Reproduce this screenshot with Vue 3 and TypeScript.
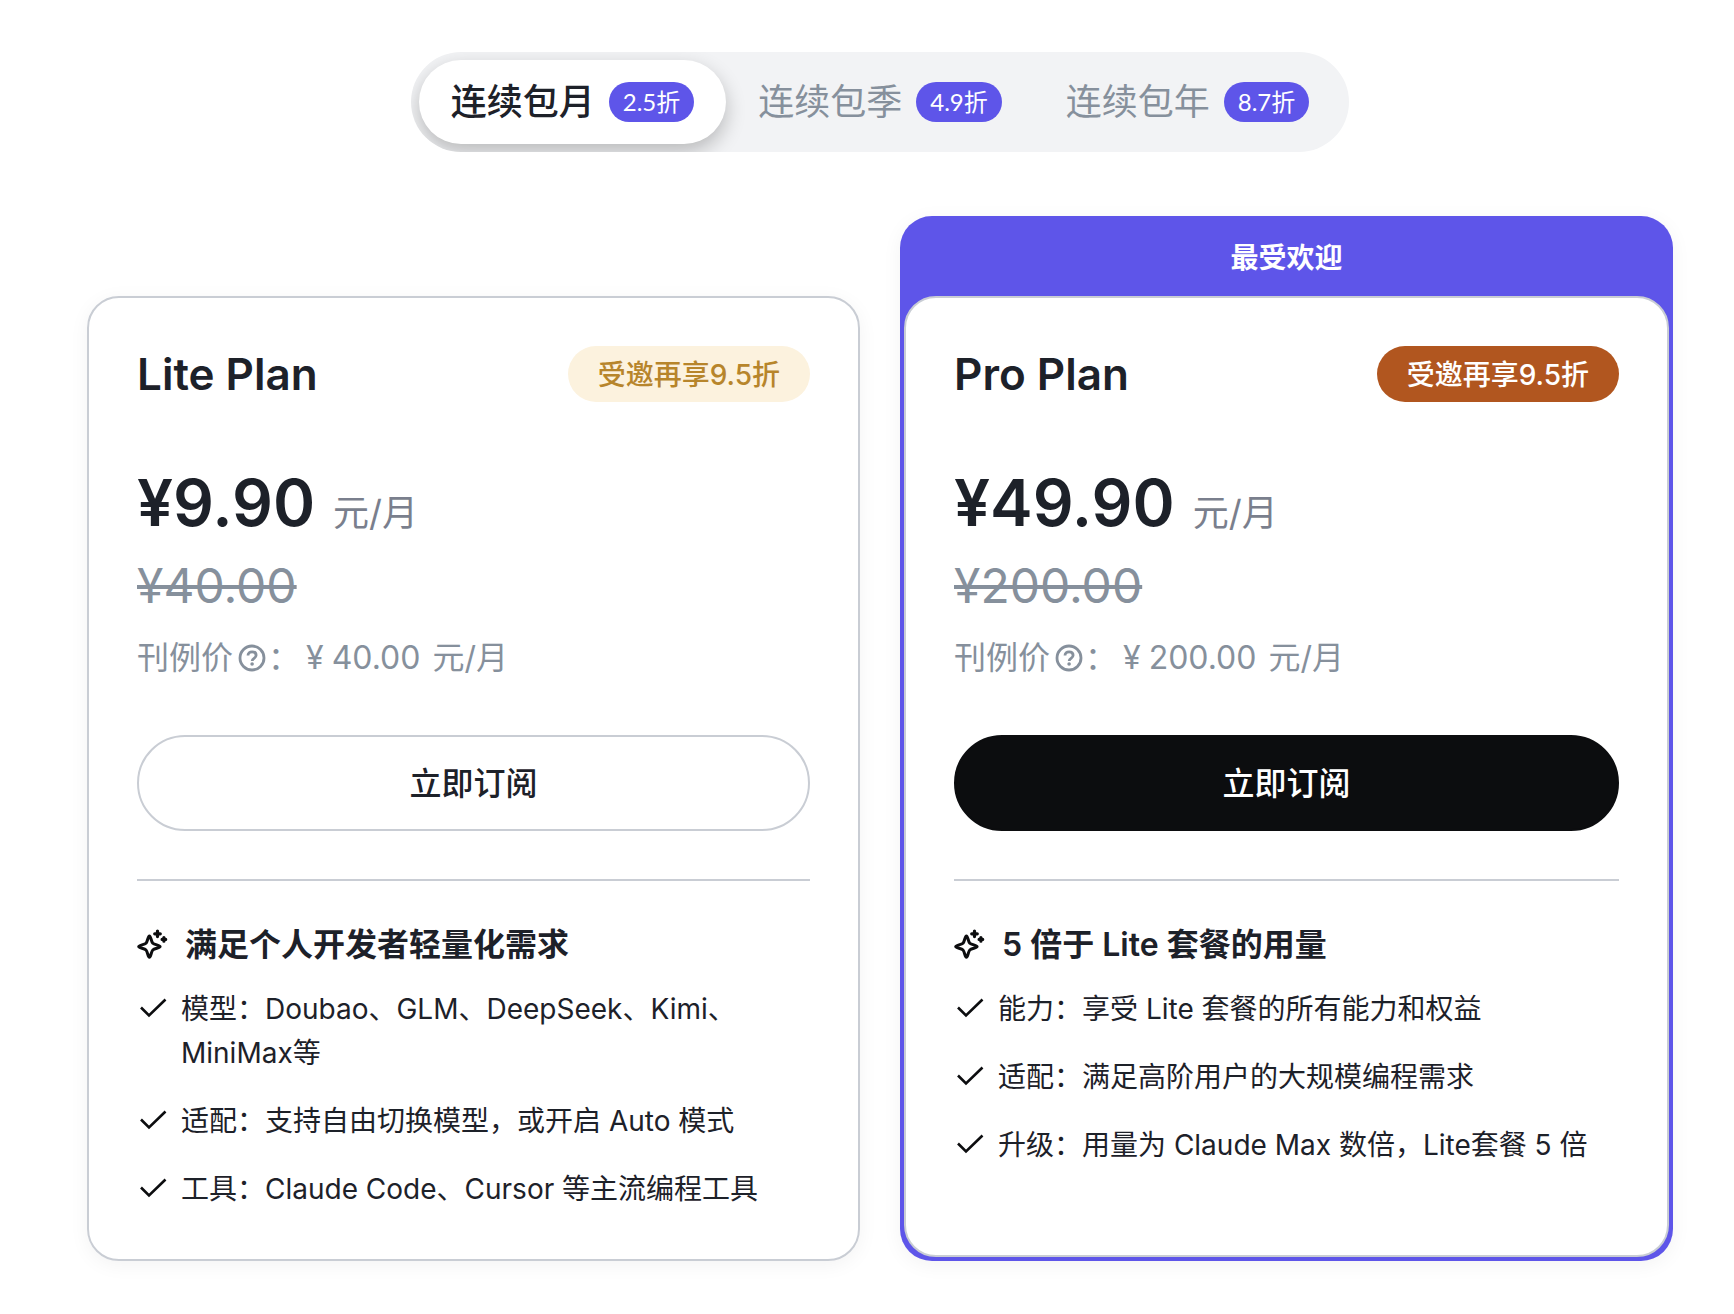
<script setup lang="ts">
import { ref } from 'vue'

interface Period {
  id: string
  label: string
  discount: string
}

interface Plan {
  id: string
  name: string
  ribbon?: string
  invite: string
  price: string
  oldPrice: string
  listPrice: string
  headline: string
  features: string[]
}

const periods: Period[] = [
  { id: 'month', label: '连续包月', discount: '2.5折' },
  { id: 'quarter', label: '连续包季', discount: '4.9折' },
  { id: 'year', label: '连续包年', discount: '8.7折' },
]

const active = ref('month')

const plans: Plan[] = [
  {
    id: 'lite',
    name: 'Lite Plan',
    invite: '受邀再享9.5折',
    price: '¥9.90',
    oldPrice: '¥40.00',
    listPrice: '40.00',
    headline: '满足个人开发者轻量化需求',
    features: [
      '模型：Doubao、GLM、DeepSeek、Kimi、MiniMax等',
      '适配：支持自由切换模型，或开启 Auto 模式',
      '工具：Claude Code、Cursor 等主流编程工具',
    ],
  },
  {
    id: 'pro',
    name: 'Pro Plan',
    ribbon: '最受欢迎',
    invite: '受邀再享9.5折',
    price: '¥49.90',
    oldPrice: '¥200.00',
    listPrice: '200.00',
    headline: '5 倍于 Lite 套餐的用量',
    features: [
      '能力：享受 Lite 套餐的所有能力和权益',
      '适配：满足高阶用户的大规模编程需求',
      '升级：用量为 Claude Max 数倍，Lite套餐 5 倍',
    ],
  },
]
</script>

<template>
  <main class="page">
    <div class="tabs" role="tablist">
      <button
        v-for="p in periods"
        :key="p.id"
        type="button"
        role="tab"
        class="tab"
        :class="{ active: active === p.id }"
        :aria-selected="active === p.id"
        @click="active = p.id"
      >
        <span>{{ p.label }}</span>
        <span class="discount">{{ p.discount }}</span>
      </button>
    </div>

    <div class="plans">
      <section v-for="plan in plans" :key="plan.id" class="plan" :class="plan.id">
        <p v-if="plan.ribbon" class="ribbon">{{ plan.ribbon }}</p>
        <div class="card">
          <header class="head">
            <h2 class="name">{{ plan.name }}</h2>
            <span class="invite">{{ plan.invite }}</span>
          </header>
          <p class="price">
            <strong class="amount">{{ plan.price }}</strong>
            <span class="unit">元/月</span>
          </p>
          <p class="old"><s>{{ plan.oldPrice }}</s></p>
          <p class="list-price">
            <span>刊例价</span>
            <svg class="help" viewBox="0 0 32 32" aria-hidden="true">
              <circle cx="16" cy="16" r="12" fill="none" stroke="currentColor" stroke-width="2.8" />
              <path d="M12 13.6c0-2.4 1.7-3.8 4.1-3.8s4 1.4 4 3.4c0 1.5-.9 2.3-2 3.1-1.3.9-1.9 1.3-1.9 2.7" fill="none" stroke="currentColor" stroke-width="2.8" />
              <circle cx="16.1" cy="22" r="1.8" fill="currentColor" />
            </svg>
            <span>：</span>
            <span class="yen">¥</span>
            <span>{{ plan.listPrice }}</span>
            <span class="list-unit">元/月</span>
          </p>
          <button type="button" class="subscribe">立即订阅</button>
          <hr class="rule" />
          <h3 class="headline">
            <svg class="icon" viewBox="0 0 32 32" aria-hidden="true">
              <path d="M12.4 6.9C13.8 6.9 14.2 12.6 15.8 14.2C17.4 15.8 23.1 16.2 23.1 17.6C23.1 19 17.4 19.4 15.8 21C14.2 22.6 13.8 28.3 12.4 28.3C11 28.3 10.6 22.6 9 21C7.4 19.4 1.7 19 1.7 17.6C1.7 16.2 7.4 15.8 9 14.2C10.6 12.6 11 6.9 12.4 6.9Z" fill="none" stroke="currentColor" stroke-width="3" stroke-linejoin="round" />
              <path d="M20.5 2v5.6M17.7 4.8h5.6M26.9 8.6v3.6M25.1 10.4h3.6" fill="none" stroke="currentColor" stroke-width="3.2" stroke-linecap="round" />
            </svg>
            <span>{{ plan.headline }}</span>
          </h3>
          <ul class="features">
            <li v-for="f in plan.features" :key="f" class="feature">
              <svg class="icon check" viewBox="0 0 32 44" aria-hidden="true">
                <path d="M4 20.5l8 8L28.5 12.5" fill="none" stroke="currentColor" stroke-width="2.6" />
              </svg>
              <span>{{ f }}</span>
            </li>
          </ul>
        </div>
      </section>
    </div>
  </main>
</template>

<style>
body {
  margin: 0;
  background: #fff;
}
</style>

<style scoped>
.page {
  box-sizing: border-box;
  padding: 52px 61px 54px 87px;
  color: #1d2129;
  font-family: Inter, 'Noto Sans CJK SC', sans-serif;
  font-size: 28px;
  line-height: 44px;
}

p,
h2,
h3,
ul {
  margin: 0;
  padding: 0;
}

button {
  font-family: inherit;
  cursor: pointer;
}

.tabs {
  display: flex;
  width: fit-content;
  margin: 0 auto;
  padding: 8px;
  border-radius: 50px;
  background: #f2f3f5;
  overflow: hidden;
}

.tab {
  display: flex;
  align-items: center;
  gap: 14px;
  height: 84px;
  padding: 0 32px;
  border: 0;
  border-radius: 42px;
  background: transparent;
  color: #86909c;
  font-size: 36px;
  line-height: 48px;
}

.tab.active {
  background: #fff;
  color: #1d2129;
  font-weight: 500;
  box-shadow: 0 8px 20px rgba(0, 0, 0, 0.24);
}

.discount {
  padding: 0 14px;
  border-radius: 20px;
  background: #5e55e9;
  color: #fff;
  font-family: Lato, 'Noto Sans CJK SC', sans-serif;
  font-size: 24px;
  font-weight: 400;
  line-height: 40px;
}

.plans {
  display: grid;
  grid-template-columns: 1fr 1fr;
  gap: 40px;
  margin-top: 64px;
}

.plan {
  display: flex;
  flex-direction: column;
  border-radius: 32px;
  box-shadow: 0 4px 20px rgba(0, 0, 0, 0.05);
}

.lite {
  margin-top: 80px;
}

.pro {
  padding: 0 4px 4px;
  background: #5e55e9;
}

.ribbon {
  padding-top: 4px;
  color: #fff;
  font-weight: 600;
  line-height: 76px;
  text-align: center;
}

.card {
  flex: 1;
  padding: 48px;
  border: 2px solid #c9cdd4;
  border-radius: 32px;
  background: #fff;
}

.head {
  display: flex;
  align-items: center;
  justify-content: space-between;
}

.name {
  font-size: 44px;
  font-weight: 600;
  line-height: 56px;
}

.invite {
  padding: 2px 30px 0;
  border-radius: 28px;
  background: #fcf2de;
  color: #b7852b;
  font-weight: 500;
  line-height: 54px;
}

.pro .invite {
  background: #b1561f;
  color: #fff;
}

.price {
  display: flex;
  align-items: baseline;
  gap: 18px;
  height: 72px;
  margin-top: 65px;
}

.amount {
  font-size: 64px;
  font-weight: 600;
  line-height: 72px;
}

.unit {
  color: #7a7f8d;
  font-size: 36px;
  line-height: 48px;
}

.old {
  margin-top: 19px;
  color: #86909c;
  font-size: 48px;
  line-height: 56px;
}

.old s {
  text-decoration-thickness: 4px;
}

.list-price {
  display: flex;
  align-items: center;
  margin-top: 20px;
  color: #86909c;
  font-size: 32px;
  line-height: 48px;
}

.help {
  width: 32px;
  height: 32px;
  margin-left: 3px;
}

.yen {
  margin: 0 8px 0 6px;
}

.list-unit {
  margin-left: 12px;
}

.subscribe {
  width: 100%;
  height: 96px;
  margin-top: 53px;
  padding: 0 0 4px;
  border: 2px solid #c9cdd4;
  border-radius: 48px;
  background: #fff;
  color: #1d2129;
  font-size: 32px;
  font-weight: 500;
}

.pro .subscribe {
  border-color: #0c0d0f;
  background: #0c0d0f;
  color: #fff;
}

.rule {
  height: 2px;
  margin: 48px 0 40px;
  border: 0;
  background: #c9cdd4;
}

.headline {
  display: flex;
  align-items: center;
  gap: 16px;
  font-size: 32px;
  font-weight: 600;
  line-height: 48px;
}

.icon {
  flex: none;
  width: 32px;
  height: 32px;
  color: #0c0d0f;
}

.features {
  display: flex;
  flex-direction: column;
  gap: 24px;
  margin-top: 18px;
  list-style: none;
}

.feature {
  display: flex;
  gap: 12px;
}

.check {
  height: 44px;
}
</style>
